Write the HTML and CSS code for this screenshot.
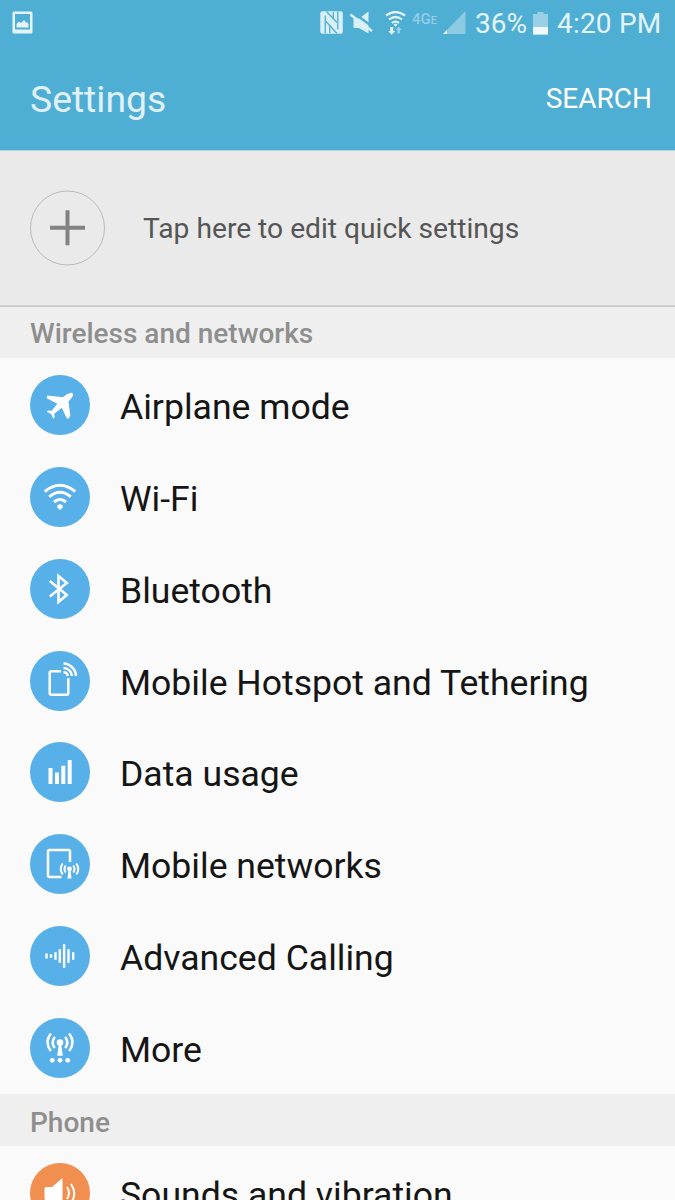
FILE: index.html
```
<!DOCTYPE html>
<html lang="en">
<head>
    <meta charset="UTF-8">
    <meta name="viewport" content="width=device-width, initial-scale=1.0">
    <title>Settings</title>
    <link rel="stylesheet" href="styles.css">
</head>
<body>
    <div class="screen">
        <header class="header">
            <div class="status-bar">
                <svg class="icon-picture" width="21" height="23" viewBox="0 0 21 23">
                    <path fill="#e3f4fa" fill-rule="evenodd" d="M2 .5h17q1.500 0 1.500 1.500v19q0 1.500-1.500 1.500H2q-1.500 0-1.500-1.500V2Q.5.5 2 .5zM3 3v15.500h15V3z"/>
                    <path fill="#e3f4fa" d="M4.500 16.500v-3.500l2.500-2.500 2 1.500 3-3 2 2.500 1-.5 1.500 2v3.500z"/>
                </svg>
                <svg class="icon-nfc" width="24" height="24" viewBox="0 0 24 24">
                    <rect x=".3" y=".3" width="22.500" height="22.500" rx="2" fill="#d9f0f7"/>
                    <path d="M5.200 22.500V4.500M17.800.5v18" fill="none" stroke="#4faed3" stroke-width="1.300"/>
                    <path d="M6.500.5L17 11.500M6 10.500l11 12" fill="none" stroke="#4faed3" stroke-width="1.300"/>
                    <path d="M9.800 14.500v7.500M13.300 1v7" fill="none" stroke="#4faed3" stroke-width="1.300"/>
                </svg>
                <svg class="icon-mute" width="23" height="24" viewBox="0 0 23 24">
                    <path d="M3.500 7.500h5.500L18.500.5v22L9 17H3.500z" fill="#d9f0f7"/>
                    <path d="M3 1.500L23 16" stroke="#4faed3" stroke-width="2.500"/>
                    <path d="M.5 3.500L22 20" stroke="#d9f0f7" stroke-width="2.500"/>
                </svg>
                <svg class="icon-wifi" width="22" height="24" viewBox="0 0 22 24">
                    <g fill="none" stroke="#e3f4fa" stroke-width="2.200">
                        <path d="M1 4.500q9.500-7 19 0"/>
                        <path d="M4 8.500q6.500-5 13 0"/>
                        <path d="M7 12q3.500-2.800 7 0"/>
                    </g>
                    <path d="M8.500 13.500q2-1.500 4 0l-2 2.300z" fill="#e3f4fa"/>
                    <path d="M5.200 16h3v4h2l-3.500 3.700-3.500-3.700h2z" fill="#e3f4fa"/>
                    <path d="M12.500 22.500h2.500v-3.500h1.700l-3-3.500-3 3.500h1.800z" fill="#9dd2e6"/>
                </svg>
                <span class="network">4G<span class="network-e">E</span></span>
                <svg class="icon-signal" width="23" height="24" viewBox="0 0 23 24">
                    <path d="M22.500 0v23H0z" fill="#8ccbe2"/>
                    <path d="M4 19v4H0z" fill="#e8f6fb"/>
                </svg>
                <span class="battery-text">36%</span>
                <svg class="icon-battery" width="15" height="23" viewBox="0 0 15 23">
                    <path d="M4.500 0h6v2H15v20.500H0V2h4.500z" fill="#9ad0e5"/>
                    <path d="M0 15h15v7.500H0z" fill="#f0fafd"/>
                </svg>
                <span class="clock">4:20 PM</span>
            </div>
            <div class="title-bar">
                <h1 class="title">Settings</h1>
                <span class="search">SEARCH</span>
            </div>
        </header>

        <div class="quick-settings">
            <svg width="75" height="76" viewBox="0 0 75 76">
                <circle cx="37.500" cy="38" r="37" fill="none" stroke="#b9b9b9"/>
                <path d="M37.500 20.300v35M20 37.800h35" stroke="#828282" stroke-width="4"/>
            </svg>
            <span class="quick-text">Tap here to edit quick settings</span>
        </div>

        <h2 class="section-title">Wireless and networks</h2>
        <ul class="list">
            <li class="row">
                <svg class="row-icon" viewBox="0 0 60 60">
                    <path d="M40 18Q43.500 17 43 20.500Q42 23 38.500 26.500L40.300 40.500L38.500 43.800L36.700 43.300L31.800 32.800L24.300 38.700L24.700 42L23.300 43.700L21.700 40L20.300 38.500L16.800 37L18 35.500L21.700 35.700L27.300 28.800L16.600 23.300L17.300 20.500L33 22.200Q36.500 18.800 40 18z"/>
                </svg>
                <span class="row-label">Airplane mode</span>
            </li>
            <li class="row">
                <svg class="row-icon" viewBox="0 0 60 60">
                    <g class="line">
                        <path d="M14.800 24.500q15.200-12.500 30.400 0"/>
                        <path d="M19.300 29.800q10.700-9 21.400 0"/>
                        <path d="M24 35q6-5 12 0"/>
                    </g>
                    <path d="M27.300 38.500q2.700-2.300 5.400 0v1.700L30 43.200l-2.700-3z"/>
                </svg>
                <span class="row-label">Wi-Fi</span>
            </li>
            <li class="row">
                <svg class="row-icon" viewBox="0 0 60 60">
                    <path class="line blue" d="M19.800 22l17 14-8.300 7V17l8.300 7-17 13.500"/>
                </svg>
                <span class="row-label">Bluetooth</span>
            </li>
            <li class="row">
                <svg class="row-icon" viewBox="0 0 60 60">
                    <path class="line mid" d="M31 20.200H21.500q-1.800 0-1.800 1.800v20q0 1.800 1.800 1.800h15q1.800 0 1.800-1.800V27"/>
                    <path class="line mid" d="M33.500 12.500A13 13 0 0 1 46 25M33.500 17A8.500 8.500 0 0 1 42 25M33.500 21.300A4.200 4.200 0 0 1 37.700 25"/>
                </svg>
                <span class="row-label">Mobile Hotspot and Tethering</span>
            </li>
            <li class="row">
                <svg class="row-icon" viewBox="0 0 60 60">
                    <path d="M18.500 26h4v16h-4zM25 30.500h4V42h-4zM31.300 23.800h4V42h-4zM37.700 18h4v24h-4z"/>
                </svg>
                <span class="row-label">Data usage</span>
            </li>
            <li class="row">
                <svg class="row-icon" viewBox="0 0 60 60">
                    <path class="line mid" d="M31.500 43H19.500q-1.500 0-1.500-1.500v-24q0-1.500 1.500-1.500h19q1.500 0 1.500 1.500V28"/>
                    <circle cx="39.500" cy="35" r="2.400"/>
                    <path d="M38.500 36h2l1 8.500h-4z"/>
                    <path class="line thin" d="M35.700 38.500q-2.500-3.500 0-7M43.300 38.500q2.500-3.500 0-7M32.700 40.500q-4-5.500 0-11M46.300 40.500q4-5.500 0-11"/>
                </svg>
                <span class="row-label">Mobile networks</span>
            </li>
            <li class="row">
                <svg class="row-icon" viewBox="0 0 60 60">
                    <path d="M15.300 27.500h2.400v5h-2.400zM19.800 28.200h2.400v3.600h-2.400zM24.300 26.200h2.400v7.600h-2.400zM28.600 23.200H31v13.600h-2.400zM32.900 18.200h2.400v23.600h-2.400zM37.300 23.200h2.400v13.600h-2.400zM42 26.200h2.400v7.600H42z"/>
                </svg>
                <span class="row-label">Advanced Calling</span>
            </li>
            <li class="row">
                <svg class="row-icon" viewBox="0 0 60 60">
                    <circle cx="30" cy="24.500" r="3.300"/>
                    <path d="M29 25h2l1.800 12.700h-5.600z"/>
                    <path class="line mid" d="M24.800 30q-4.300-5.500 0-11M35.200 30q4.300-5.500 0-11M20.800 33q-6.700-8.500 0-17.500M39.200 33q6.700-8.500 0-17.500"/>
                    <circle cx="22.300" cy="42.300" r="2.400"/>
                    <circle cx="30" cy="42.300" r="2.400"/>
                    <circle cx="37.700" cy="42.300" r="2.400"/>
                </svg>
                <span class="row-label">More</span>
            </li>
        </ul>

        <h2 class="section-title phone">Phone</h2>
        <ul class="list">
            <li class="row">
                <svg class="row-icon orange" viewBox="0 0 60 60">
                    <path d="M16 24h6l10.500-9v31L22 37h-6q-1.500 0-1.500-1.500v-10Q14.500 24 16 24z"/>
                    <path class="line thin" d="M37 24q4 6 0 12M41 21q6.500 9.500 0 19"/>
                </svg>
                <span class="row-label">Sounds and vibration</span>
            </li>
        </ul>
    </div>
</body>
</html>
```
FILE: styles.css
```
* {
    box-sizing: border-box;
}
body {
    margin: 0;
    font-family: Roboto, "Liberation Sans", sans-serif;
    background: #fafafa;
}
.screen {
    width: 675px;
    height: 1200px;
    overflow: hidden;
}
.header {
    height: 150px;
    background: #4faed3;
}
.status-bar {
    display: flex;
    align-items: flex-start;
    height: 48px;
    padding: 11px 13px 0 12px;
    color: #e3f4fa;
}
.status-bar svg {
    flex: none;
}
.icon-nfc {
    margin-left: auto;
}
.icon-mute {
    margin-left: 6px;
}
.icon-wifi {
    margin-left: 12px;
}
.network {
    width: 27px;
    margin: 1px 0 0 5px;
    font-size: 15px;
    line-height: 15px;
    font-weight: 500;
    white-space: nowrap;
    color: #94cee5;
}
.network-e {
    font-size: 11px;
}
.icon-signal {
    margin-left: 4px;
}
.battery-text {
    width: 53px;
    margin-left: 9px;
    font-size: 28px;
    line-height: 26px;
    white-space: nowrap;
}
.icon-battery {
    margin: 1px 0 0 5px;
}
.clock {
    width: 105px;
    margin-left: 9px;
    font-size: 28px;
    line-height: 26px;
    letter-spacing: 0.2px;
    white-space: nowrap;
}
.title-bar {
    display: flex;
    justify-content: space-between;
    align-items: center;
    height: 101px;
    padding: 0 23px 0 30px;
}
.title {
    margin: 0;
    font-size: 37.3px;
    font-weight: 400;
    color: #e0f1fa;
}
.search {
    font-size: 28px;
    color: #fff;
}
.quick-settings {
    display: flex;
    align-items: center;
    gap: 38px;
    height: 157px;
    padding: 0 30px;
    border-top: 1px solid #c6cbd0;
    border-bottom: 2px solid #cdcdcd;
    background: #eaeaea;
}
.quick-text {
    padding-top: 1px;
    font-size: 28.2px;
    color: #555;
}
.section-title {
    height: 51px;
    margin: 0;
    padding-left: 30px;
    font-size: 28px;
    line-height: 53px;
    font-weight: 500;
    color: #8e8e8e;
    background: #efefef;
}
.phone {
    height: 52px;
    line-height: 57px;
}
.list {
    margin: 0;
    padding: 1px 0 0;
    list-style: none;
}
.row {
    display: flex;
    align-items: center;
    gap: 30px;
    height: 91.875px;
    padding: 0 30px;
}
.row-icon {
    width: 60px;
    height: 60px;
    border-radius: 50%;
    background: #58b0e8;
    fill: #fff;
}
.row-icon.orange {
    background: #f08f50;
}
.line {
    fill: none;
    stroke: #fff;
    stroke-width: 3;
}
.thin {
    stroke-width: 2;
}
.mid {
    stroke-width: 2.5;
}
.blue {
    stroke-width: 2.6;
}
.row-label {
    padding-top: 4px;
    font-size: 35.6px;
    line-height: 42px;
    white-space: nowrap;
    color: #151515;
}
```
